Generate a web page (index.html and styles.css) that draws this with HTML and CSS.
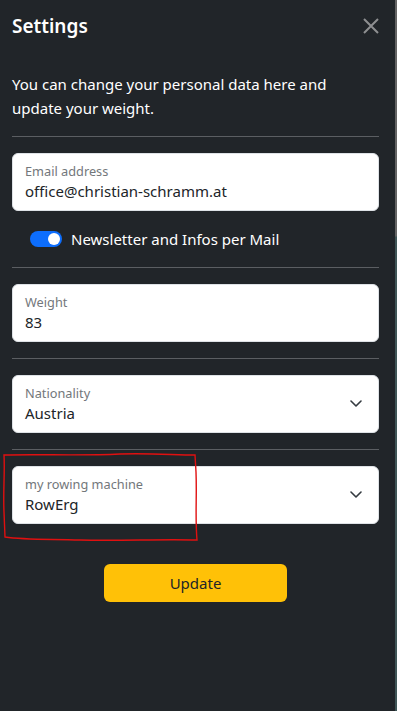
FILE: index.html
```html
<!DOCTYPE html>
<html lang="en">
<head>
<meta charset="utf-8">
<title>Settings</title>
<link rel="stylesheet" href="styles.css">
</head>
<body>
<div class="screen">
  <div class="panel">
    <header class="panel-header">
      <h5 class="panel-title">Settings</h5>
      <button class="btn-close" aria-label="Close">
        <svg width="16" height="16" viewBox="0 0 16 16"><path d="M1 1L15 15M15 1L1 15" stroke="currentColor" stroke-width="2" fill="none"/></svg>
      </button>
    </header>
    <div class="panel-body">
      <p class="intro">You can change your personal data here and update your weight.</p>
      <hr class="divider">
      <div class="field">
        <span class="field-label">Email address</span>
        <span class="field-value">office@christian-schramm.at</span>
      </div>
      <label class="switch-row">
        <span class="switch"><span class="knob"></span></span>
        <span class="switch-label">Newsletter and Infos per Mail</span>
      </label>
      <hr class="divider">
      <div class="field">
        <span class="field-label">Weight</span>
        <span class="field-value">83</span>
      </div>
      <hr class="divider">
      <div class="field select">
        <span class="field-label">Nationality</span>
        <span class="field-value">Austria</span>
        <svg class="chevron" width="12" height="7" viewBox="0 0 12 7"><path d="M1 1l5 5 5-5" stroke="#343a40" stroke-width="1.6" fill="none" stroke-linecap="round" stroke-linejoin="round"/></svg>
      </div>
      <hr class="divider">
      <div class="field select">
        <span class="field-label">my rowing machine</span>
        <span class="field-value">RowErg</span>
        <svg class="chevron" width="12" height="7" viewBox="0 0 12 7"><path d="M1 1l5 5 5-5" stroke="#343a40" stroke-width="1.6" fill="none" stroke-linecap="round" stroke-linejoin="round"/></svg>
      </div>
      <div class="actions">
        <button class="btn-update">Update</button>
      </div>
    </div>
    <svg class="annotation" width="200" height="92" viewBox="0 0 200 92">
      <path d="M4 3 C40 2 80 4 120 2 C150 1 175 3 195 3 L196 20 C197 45 195 65 197 88 C160 87 120 89 80 88 C50 87 25 88 5 85 L4 60 C3 40 5 20 4 3 Z" stroke="#e01010" stroke-width="1.4" fill="none"/>
    </svg>
  </div>
  <div class="edge"></div>
</div>
</body>
</html>
```

FILE: styles.css
```css
* { box-sizing: border-box; }
html, body {
  margin: 0;
  padding: 0;
  background: #212529;
}
body {
  font-family: "Noto Sans", "Open Sans", "Liberation Sans", sans-serif;
  color: #fff;
  font-size: 15px;
  line-height: 24px;
}
.screen {
  display: flex;
  width: 397px;
  height: 711px;
  overflow: hidden;
}
.panel {
  position: relative;
  width: 395px;
  flex: none;
  background: #212529;
}
.edge {
  width: 2px;
  background: linear-gradient(to bottom, #646464 0, #646464 236px, #3f5557 237px, #3f5557 100%);
}
.panel-header {
  display: flex;
  align-items: center;
  justify-content: space-between;
  padding: 11px 16px 11px 12px;
}
.panel-title {
  margin: 0;
  font-size: 19px;
  line-height: 30px;
  font-weight: 600;
}
.btn-close {
  border: 0;
  background: transparent;
  color: #8e8f91;
  padding: 0;
  width: 16px;
  height: 16px;
  display: flex;
}
.panel-body {
  padding: 20px 16px 0 12px;
}
.intro {
  margin: 0;
}
.divider {
  margin: 16px 0;
  border: 0;
  border-top: 1px solid #5b5e62;
  height: 0;
}
.field {
  position: relative;
  display: flex;
  flex-direction: column;
  height: 58px;
  background: #fff;
  border: 1px solid #dee2e6;
  border-radius: 6px;
  padding: 7px 12px 0;
}
.field-label {
  font-size: 12.75px;
  line-height: 20px;
  color: #73777b;
}
.field-value {
  font-size: 15px;
  line-height: 20px;
  color: #212529;
}
.select { padding-right: 36px; }
.chevron {
  position: absolute;
  right: 16px;
  top: 24px;
}
.switch-row {
  display: flex;
  align-items: center;
  gap: 9px;
  margin: 16px 0 0;
  padding-left: 18px;
  height: 24px;
}
.switch {
  position: relative;
  width: 32px;
  height: 16px;
  border-radius: 8px;
  background: #0d6efd;
  display: flex;
  align-items: center;
  justify-content: flex-end;
  padding: 2px;
}
.knob {
  width: 12px;
  height: 12px;
  border-radius: 50%;
  background: #fff;
}
.switch-label { color: #fff; }
.actions {
  display: flex;
  justify-content: center;
  margin-top: 40px;
}
.btn-update {
  width: 183px;
  height: 38px;
  border: 0;
  border-radius: 6px;
  background: #ffc107;
  color: #212529;
  font-family: inherit;
  font-size: 15px;
}
.annotation {
  position: absolute;
  left: 0;
  top: 452px;
  pointer-events: none;
}
```
